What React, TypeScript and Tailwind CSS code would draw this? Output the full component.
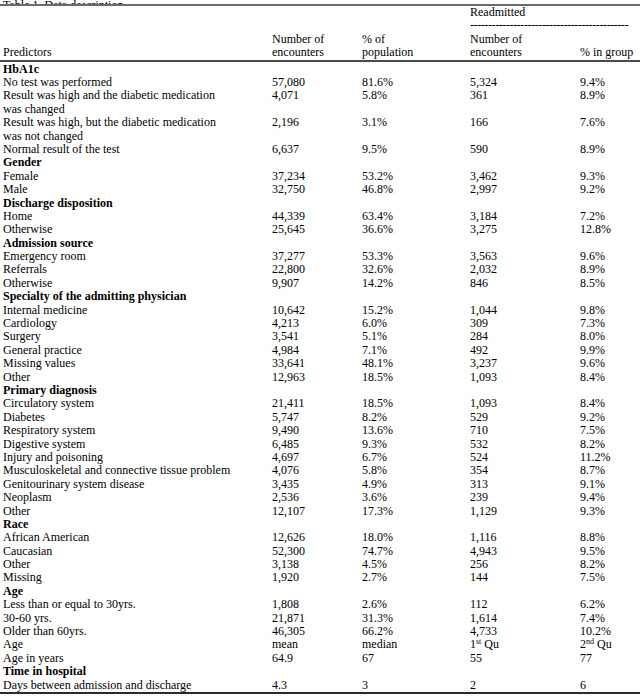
import React from 'react';

type Row = {
    label: string;
    head?: boolean;
    cells?: React.ReactNode[];
};

const rows: Row[] = [
    { label: "HbA1c", head: true },
    { label: "No test was performed", cells: ["57,080", "81.6%", "5,324", "9.4%"] },
    { label: "Result was high and the diabetic medication", cells: ["4,071", "5.8%", "361", "8.9%"] },
    { label: "was changed" },
    { label: "Result was high, but the diabetic medication", cells: ["2,196", "3.1%", "166", "7.6%"] },
    { label: "was not changed" },
    { label: "Normal result of the test", cells: ["6,637", "9.5%", "590", "8.9%"] },
    { label: "Gender", head: true },
    { label: "Female", cells: ["37,234", "53.2%", "3,462", "9.3%"] },
    { label: "Male", cells: ["32,750", "46.8%", "2,997", "9.2%"] },
    { label: "Discharge disposition", head: true },
    { label: "Home", cells: ["44,339", "63.4%", "3,184", "7.2%"] },
    { label: "Otherwise", cells: ["25,645", "36.6%", "3,275", "12.8%"] },
    { label: "Admission source", head: true },
    { label: "Emergency room", cells: ["37,277", "53.3%", "3,563", "9.6%"] },
    { label: "Referrals", cells: ["22,800", "32.6%", "2,032", "8.9%"] },
    { label: "Otherwise", cells: ["9,907", "14.2%", "846", "8.5%"] },
    { label: "Specialty of the admitting physician", head: true },
    { label: "Internal medicine", cells: ["10,642", "15.2%", "1,044", "9.8%"] },
    { label: "Cardiology", cells: ["4,213", "6.0%", "309", "7.3%"] },
    { label: "Surgery", cells: ["3,541", "5.1%", "284", "8.0%"] },
    { label: "General practice", cells: ["4,984", "7.1%", "492", "9.9%"] },
    { label: "Missing values", cells: ["33,641", "48.1%", "3,237", "9.6%"] },
    { label: "Other", cells: ["12,963", "18.5%", "1,093", "8.4%"] },
    { label: "Primary diagnosis", head: true },
    { label: "Circulatory system", cells: ["21,411", "18.5%", "1,093", "8.4%"] },
    { label: "Diabetes", cells: ["5,747", "8.2%", "529", "9.2%"] },
    { label: "Respiratory system", cells: ["9,490", "13.6%", "710", "7.5%"] },
    { label: "Digestive system", cells: ["6,485", "9.3%", "532", "8.2%"] },
    { label: "Injury and poisoning", cells: ["4,697", "6.7%", "524", "11.2%"] },
    { label: "Musculoskeletal and connective tissue problem", cells: ["4,076", "5.8%", "354", "8.7%"] },
    { label: "Genitourinary system disease", cells: ["3,435", "4.9%", "313", "9.1%"] },
    { label: "Neoplasm", cells: ["2,536", "3.6%", "239", "9.4%"] },
    { label: "Other", cells: ["12,107", "17.3%", "1,129", "9.3%"] },
    { label: "Race", head: true },
    { label: "African American", cells: ["12,626", "18.0%", "1,116", "8.8%"] },
    { label: "Caucasian", cells: ["52,300", "74.7%", "4,943", "9.5%"] },
    { label: "Other", cells: ["3,138", "4.5%", "256", "8.2%"] },
    { label: "Missing", cells: ["1,920", "2.7%", "144", "7.5%"] },
    { label: "Age", head: true },
    { label: "Less than or equal to 30yrs.", cells: ["1,808", "2.6%", "112", "6.2%"] },
    { label: "30-60 yrs.", cells: ["21,871", "31.3%", "1,614", "7.4%"] },
    { label: "Older than 60yrs.", cells: ["46,305", "66.2%", "4,733", "10.2%"] },
    {
        label: "Age",
        cells: [
            "mean",
            "median",
            <>1<sup className="text-[8px] leading-none">st</sup> Qu</>,
            <>2<sup className="text-[8px] leading-none">nd</sup> Qu</>,
        ],
    },
    { label: "Age in years", cells: ["64.9", "67", "55", "77"] },
    { label: "Time in hospital", head: true },
    { label: "Days between admission and discharge", cells: ["4.3", "3", "2", "6"] },
];

const grid = "grid grid-cols-[269px_90px_108px_110px_1fr]";

export default function App() {
    return (
        <div className="w-[640px] h-[698px] overflow-hidden bg-white text-black text-[12px] font-['Liberation_Serif',serif]">
            {/* caption, mostly above the view */}
            <div className="h-[4px] overflow-hidden relative">
                <div className="absolute bottom-[-7px] left-[3px] leading-none">Table 1. Data description</div>
            </div>
            <div className="border-t-2 border-[#6b6b6b]"></div>

            {/* header */}
            <div className={`${grid} px-[3px] leading-[13.4px] border-b-2 border-[#4a4a4a]`}>
                <div className="flex items-end">Predictors</div>
                <div className="flex flex-col justify-end">
                    <span>Number of</span>
                    <span>encounters</span>
                </div>
                <div className="flex flex-col justify-end">
                    <span>% of</span>
                    <span>population</span>
                </div>
                <div className="col-span-2 flex flex-col">
                    <span>Readmitted</span>
                    <span className="whitespace-nowrap tracking-[-0.4px]">
                        --------------------------------------------
                    </span>
                    <div className="grid grid-cols-[110px_1fr]">
                        <div className="flex flex-col justify-end">
                            <span>Number of</span>
                            <span>encounters</span>
                        </div>
                        <div className="flex items-end">% in group</div>
                    </div>
                </div>
            </div>

            {/* body */}
            <div className="border-b-2 border-[#2a2a2a] pt-[1px]">
                {rows.map((row, i) => (
                    <div key={i} className={`${grid} px-[3px] h-[13.4px] leading-[13.4px] whitespace-nowrap`}>
                        <div className={row.head ? "font-bold" : ""}>{row.label}</div>
                        {(row.cells ?? ["", "", "", ""]).map((c, j) => (
                            <div key={j}>{c}</div>
                        ))}
                    </div>
                ))}
            </div>
        </div>
    );
}
